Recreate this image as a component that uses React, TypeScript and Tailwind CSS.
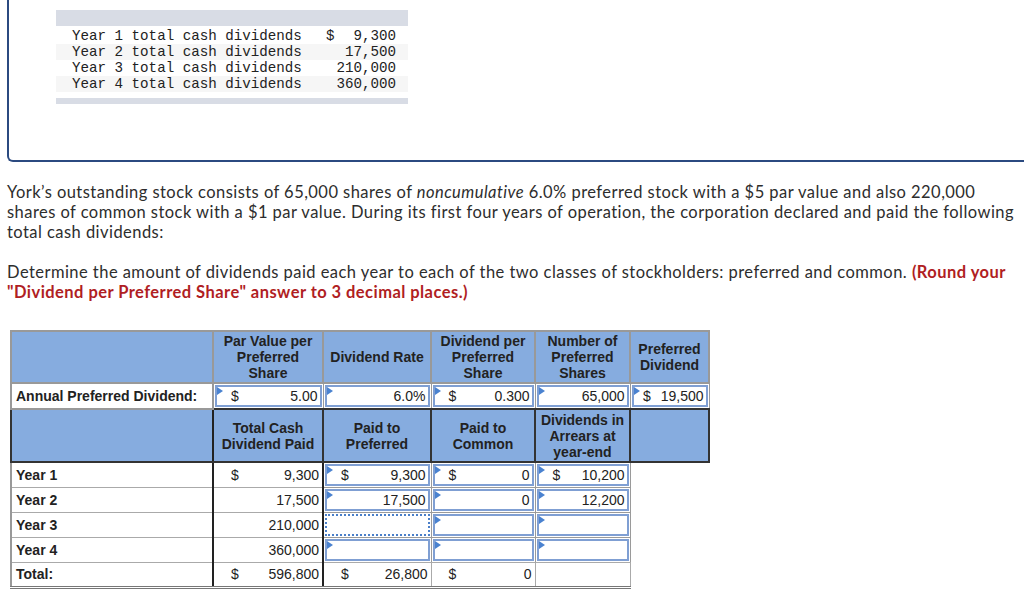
import React from 'react';

const dividendLines = [
  { label: 'Year 1 total cash dividends', dollar: '$', amount: '9,300' },
  { label: 'Year 2 total cash dividends', dollar: '', amount: '17,500' },
  { label: 'Year 3 total cash dividends', dollar: '', amount: '210,000' },
  { label: 'Year 4 total cash dividends', dollar: '', amount: '360,000' },
];

const Flag = () => (
  <span className="absolute left-0 top-0 w-0 h-0 border-y-[4px] border-y-transparent border-l-[6px] border-l-[#4a82d0]" />
);

interface InputCellProps {
  dollar?: string;
  value?: string;
  dotted?: boolean;
  flag?: boolean;
}

const InputCell: React.FC<InputCellProps> = ({ dollar, value, dotted, flag = true }) => (
  <td className="p-[1px] border border-[#9a9a9a] align-middle">
    <div
      className={`relative h-[22px] bg-white flex items-center justify-between pl-[14px] pr-[2px] border-2 ${
        dotted ? 'border-dotted border-[#4a7fc9]' : 'border-[#7f9fd3]'
      }`}
    >
      {flag && <Flag />}
      <span>{dollar}</span>
      <span>{value}</span>
    </div>
  </td>
);

const PlainCell: React.FC<{ dollar?: string; value?: string; className?: string }> = ({ dollar, value, className }) => (
  <td className={`px-[3px] align-middle ${className ?? ''}`}>
    <div className="flex items-center justify-between pl-[14px]">
      <span>{dollar}</span>
      <span>{value}</span>
    </div>
  </td>
);

export default function App() {
  return (
    <div className="w-[1024px] h-[596px] overflow-hidden bg-white px-[7px]">
      <div className="w-[1040px] h-[162px] border-l-2 border-b-2 border-[#2b4a80] rounded-bl-[6px] pl-[47px] pt-[10px]">
        <div className="w-[352px]">
          <div className="h-[16px] bg-[#d8dce5]" />
          <div className="font-['Liberation_Mono',monospace] text-[14.2px] leading-[16px] text-[#222] py-[2px]">
            {dividendLines.map((d, i) => (
              <div key={d.label} className={`flex pl-[16px] pr-[12px] ${i % 2 === 1 ? 'bg-[#f6f6f6]' : ''}`}>
                <span className="w-[254px]">{d.label}</span>
                <span className="w-[16px]">{d.dollar}</span>
                <span className="flex-1 text-right">{d.amount}</span>
              </div>
            ))}
          </div>
          <div className="mt-[4px] h-[6px] bg-[#d8dce5]" />
        </div>
      </div>

      <div className="font-['Lato',sans-serif] text-[16.5px] tracking-[0.45px] leading-[20px] text-[#2d2d2d] mt-[20px] w-[1017px]">
        <p>
          York’s outstanding stock consists of 65,000 shares of <i>noncumulative</i> 6.0% preferred stock with a $5 par value and also 220,000 shares of common stock with a $1 par value. During its first four years of operation, the corporation declared and paid the following total cash dividends:
        </p>
        <p className="mt-[20px]">
          Determine the amount of dividends paid each year to each of the two classes of stockholders: preferred and common.{' '}
          <b className="text-[#b01e23]">(Round your "Dividend per Preferred Share" answer to 3 decimal places.)</b>
        </p>
      </div>

      <table className="mt-[28px] ml-[3px] table-fixed border-collapse font-['Liberation_Sans',Arial,sans-serif] text-[14px] text-[#222]">
        <colgroup>
          <col className="w-[202px]" />
          <col className="w-[110px]" />
          <col className="w-[108px]" />
          <col className="w-[104px]" />
          <col className="w-[95px]" />
          <col className="w-[79px]" />
        </colgroup>
        <tbody>
          <tr className="h-[52px] bg-[#86acdf] font-bold text-center leading-[16px]">
            <td className="border-2 border-[#999]" />
            <td className="border-2 border-[#999]">Par Value per<br />Preferred<br />Share</td>
            <td className="border-2 border-[#999]">Dividend Rate</td>
            <td className="border-2 border-[#999]">Dividend per<br />Preferred<br />Share</td>
            <td className="border-2 border-[#999]">Number of<br />Preferred<br />Shares</td>
            <td className="border-2 border-[#999]">Preferred<br />Dividend</td>
          </tr>
          <tr className="h-[25px]">
            <td className="border-2 border-[#999] px-[4px] font-bold">Annual Preferred Dividend:</td>
            <InputCell dollar="$" value="5.00" />
            <InputCell value="6.0%" />
            <InputCell dollar="$" value="0.300" />
            <InputCell value="65,000" />
            <td className="p-[1px] border border-[#9a9a9a] align-middle">
              <div className="relative h-[22px] bg-white flex items-center justify-end gap-[10px] pr-[2px] border-2 border-[#7f9fd3]">
                <Flag />
                <span>$</span>
                <span>19,500</span>
              </div>
            </td>
          </tr>
          <tr className="h-[53px] bg-[#86acdf] font-bold text-center leading-[16px]">
            <td className="border-2 border-[#333] border-r-[#222]" />
            <td className="border-2 border-[#333]">Total Cash<br />Dividend Paid</td>
            <td className="border-2 border-[#333]">Paid to<br />Preferred</td>
            <td className="border-2 border-[#333]">Paid to<br />Common</td>
            <td className="border-2 border-[#333]">Dividends in<br />Arrears at<br />year-end</td>
            <td className="border-2 border-[#333]" />
          </tr>
          <tr className="h-[25px]">
            <td className="border border-[#aaa] border-l-2 border-l-[#999] border-r-2 border-r-[#222] px-[4px] font-bold">Year 1</td>
            <PlainCell dollar="$" value="9,300" className="border border-[#aaa] border-r-2 border-r-[#222]" />
            <InputCell dollar="$" value="9,300" />
            <InputCell dollar="$" value="0" />
            <InputCell dollar="$" value="10,200" />
            <td />
          </tr>
          <tr className="h-[25px]">
            <td className="border border-[#aaa] border-l-2 border-l-[#999] border-r-2 border-r-[#222] px-[4px] font-bold">Year 2</td>
            <PlainCell value="17,500" className="border border-[#aaa] border-r-2 border-r-[#222]" />
            <InputCell value="17,500" />
            <InputCell value="0" />
            <InputCell value="12,200" />
            <td />
          </tr>
          <tr className="h-[25px]">
            <td className="border border-[#aaa] border-l-2 border-l-[#999] border-r-2 border-r-[#222] px-[4px] font-bold">Year 3</td>
            <PlainCell value="210,000" className="border border-[#aaa] border-r-2 border-r-[#222]" />
            <InputCell dotted flag={false} />
            <InputCell />
            <InputCell />
            <td />
          </tr>
          <tr className="h-[25px]">
            <td className="border border-[#aaa] border-l-2 border-l-[#999] border-r-2 border-r-[#222] px-[4px] font-bold">Year 4</td>
            <PlainCell value="360,000" className="border border-[#aaa] border-r-2 border-r-[#222]" />
            <InputCell />
            <InputCell />
            <InputCell />
            <td />
          </tr>
          <tr className="h-[25px]">
            <td className="border border-[#aaa] border-l-2 border-l-[#999] border-r-2 border-r-[#222] border-b-[3px] border-b-[#777] border-double px-[4px] font-bold">Total:</td>
            <PlainCell dollar="$" value="596,800" className="border border-[#aaa] border-r-2 border-r-[#222] border-b-[3px] border-b-[#777] border-double" />
            <PlainCell dollar="$" value="26,800" className="border border-[#aaa] border-b-[3px] border-b-[#777] border-double" />
            <PlainCell dollar="$" value="0" className="border border-[#aaa] border-b-[3px] border-b-[#777] border-double" />
            <td className="border border-[#aaa] border-b-[3px] border-b-[#777] border-double" />
            <td />
          </tr>
        </tbody>
      </table>
    </div>
  );
}
